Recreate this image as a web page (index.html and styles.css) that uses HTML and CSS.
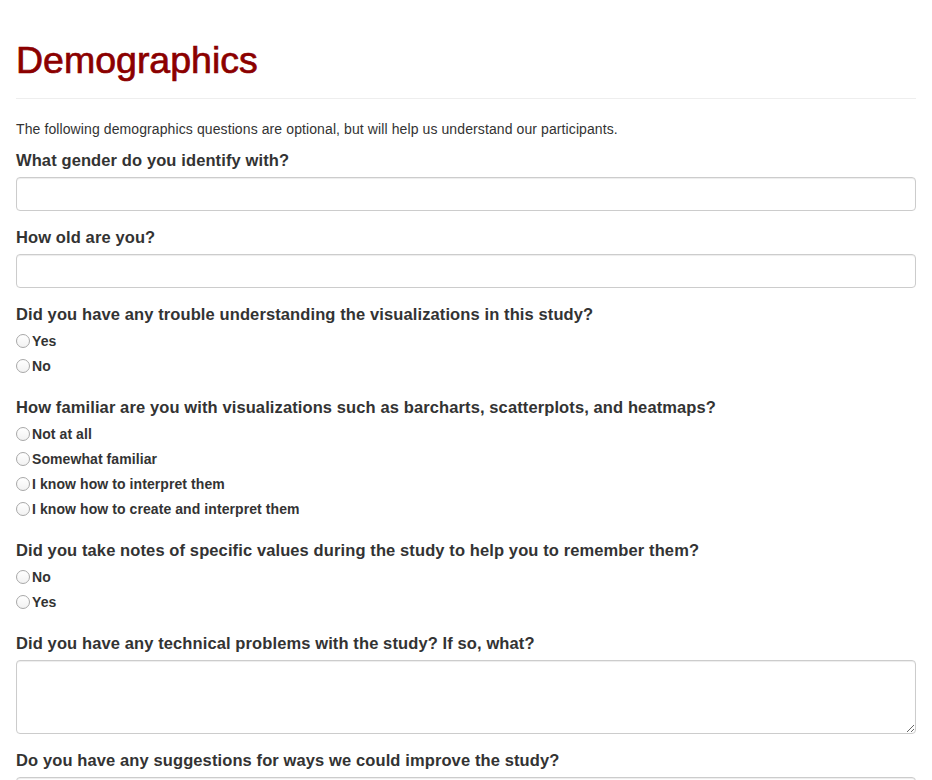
FILE: index.html
```html
<!DOCTYPE html>
<html>
<head>
<meta charset="utf-8">
<link rel="stylesheet" href="styles.css">
</head>
<body>
<div class="container">
  <h1 class="page-header">Demographics</h1>
  <p class="intro">The following demographics questions are optional, but will help us understand our participants.</p>
  <form>
    <div class="form-group">
      <label class="q">What gender do you identify with?</label>
      <input type="text" class="form-control">
    </div>
    <div class="form-group">
      <label class="q">How old are you?</label>
      <input type="text" class="form-control">
    </div>
    <div class="form-group radios">
      <label class="q">Did you have any trouble understanding the visualizations in this study?</label>
      <label class="opt"><input type="radio" name="trouble"><span>Yes</span></label>
      <label class="opt"><input type="radio" name="trouble"><span>No</span></label>
    </div>
    <div class="form-group radios">
      <label class="q">How familiar are you with visualizations such as barcharts, scatterplots, and heatmaps?</label>
      <label class="opt"><input type="radio" name="fam"><span>Not at all</span></label>
      <label class="opt"><input type="radio" name="fam"><span>Somewhat familiar</span></label>
      <label class="opt"><input type="radio" name="fam"><span>I know how to interpret them</span></label>
      <label class="opt"><input type="radio" name="fam"><span>I know how to create and interpret them</span></label>
    </div>
    <div class="form-group radios">
      <label class="q">Did you take notes of specific values during the study to help you to remember them?</label>
      <label class="opt"><input type="radio" name="notes"><span>No</span></label>
      <label class="opt"><input type="radio" name="notes"><span>Yes</span></label>
    </div>
    <div class="form-group">
      <label class="q">Did you have any technical problems with the study? If so, what?</label>
      <textarea class="form-control area"></textarea>
    </div>
    <div class="form-group">
      <label class="q">Do you have any suggestions for ways we could improve the study?</label>
      <textarea class="form-control area"></textarea>
    </div>
  </form>
</div>
</body>
</html>
```
FILE: styles.css
```css
html, body {
  margin: 0;
  padding: 0;
  background: #fff;
}
body {
  font-family: "Liberation Sans", Arial, Helvetica, sans-serif;
  color: #333;
  font-size: 14px;
  line-height: 20px;
}
.container {
  padding: 0 16px;
}
.page-header {
  margin: 40px 0 20px;
  padding-bottom: 18px;
  border-bottom: 1px solid #eee;
  font-size: 37.5px;
  font-weight: normal;
  line-height: 40px;
  color: #8b0000;
  -webkit-text-stroke: 0.7px #8b0000;
}
.intro {
  margin: 0 0 10px;
  font-size: 14px;
  letter-spacing: 0.1px;
}
.form-group {
  margin-bottom: 15px;
}
.q {
  display: block;
  font-weight: bold;
  font-size: 16.5px;
  line-height: 22px;
  margin-bottom: 6px;
  letter-spacing: 0.11px;
}
.radios {
  margin-bottom: 18px;
}
.radios .q {
  margin-bottom: 3px;
}
.opt {
  display: flex;
  align-items: center;
  height: 25px;
  font-weight: bold;
  font-size: 14px;
  letter-spacing: 0.08px;
}
.opt input {
  appearance: none;
  -webkit-appearance: none;
  width: 14px;
  height: 14px;
  margin: 0 2px 0 0;
  border: 1px solid #a8a8a8;
  border-radius: 50%;
  background: linear-gradient(#fff, #f2f2f2);
  box-sizing: border-box;
}
.form-control {
  display: block;
  width: 100%;
  box-sizing: border-box;
  height: 34px;
  padding: 6px 12px;
  font-size: 14px;
  border: 1px solid #ccc;
  border-radius: 4px;
  box-shadow: inset 0 1px 1px rgba(0,0,0,.075);
  background: #fff;
  font-family: inherit;
}
.area {
  height: 74px;
}
```
